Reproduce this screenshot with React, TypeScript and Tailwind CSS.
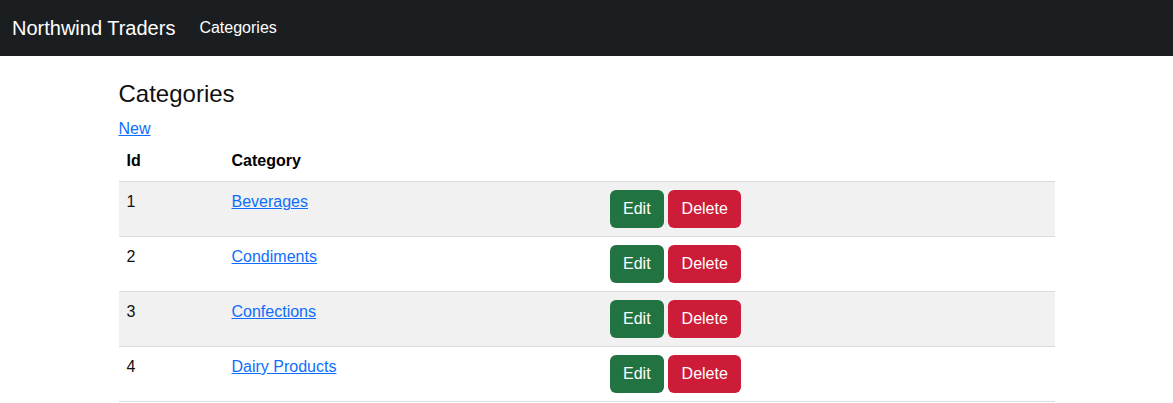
const categories = [
  { id: 1, name: "Beverages" },
  { id: 2, name: "Condiments" },
  { id: 3, name: "Confections" },
  { id: 4, name: "Dairy Products" },
];

export default function App() {
  return (
    <div className="min-h-screen bg-white font-['Liberation_Sans',Arial,sans-serif] text-[#111]">
      <nav className="flex h-14 items-center bg-[#1b1e21] px-3">
        <a href="#" className="mr-6 text-[20px] leading-[30px] text-white">
          Northwind Traders
        </a>
        <a href="#" className="text-base leading-6 text-white">
          Categories
        </a>
      </nav>

      <main className="mx-auto w-[936px] pt-6">
        <h4 className="mb-2 text-[24px] leading-[28.8px] font-normal">Categories</h4>
        <p className="text-base leading-6">
          <a href="#" className="text-[#0d6efd] underline">
            New
          </a>
        </p>

        <table className="w-full border-collapse text-base leading-6">
          <thead>
            <tr className="border-b border-[#d9d9d9]">
              <th className="w-[105px] p-2 text-left font-bold text-black">Id</th>
              <th className="w-[378px] p-2 text-left font-bold text-black">Category</th>
              <th className="p-2"></th>
            </tr>
          </thead>
          <tbody>
            {categories.map((c, i) => (
              <tr
                key={c.id}
                className={`border-b border-[#d6dde3] align-top ${i % 2 === 0 ? "bg-[#f1f1f1]" : "bg-white"}`}
              >
                <td className="p-2">{c.id}</td>
                <td className="p-2">
                  <a href="#" className="text-[#0d6efd] underline">
                    {c.name}
                  </a>
                </td>
                <td className="p-2">
                  <div className="flex gap-1">
                    <button
                      type="button"
                      className="rounded-md bg-[#217342] px-[13.5px] py-1.5 text-base leading-[26px] text-white"
                    >
                      Edit
                    </button>
                    <button
                      type="button"
                      className="rounded-md bg-[#cd1c37] px-[13.5px] py-1.5 text-base leading-[26px] text-white"
                    >
                      Delete
                    </button>
                  </div>
                </td>
              </tr>
            ))}
          </tbody>
        </table>
      </main>
    </div>
  );
}
